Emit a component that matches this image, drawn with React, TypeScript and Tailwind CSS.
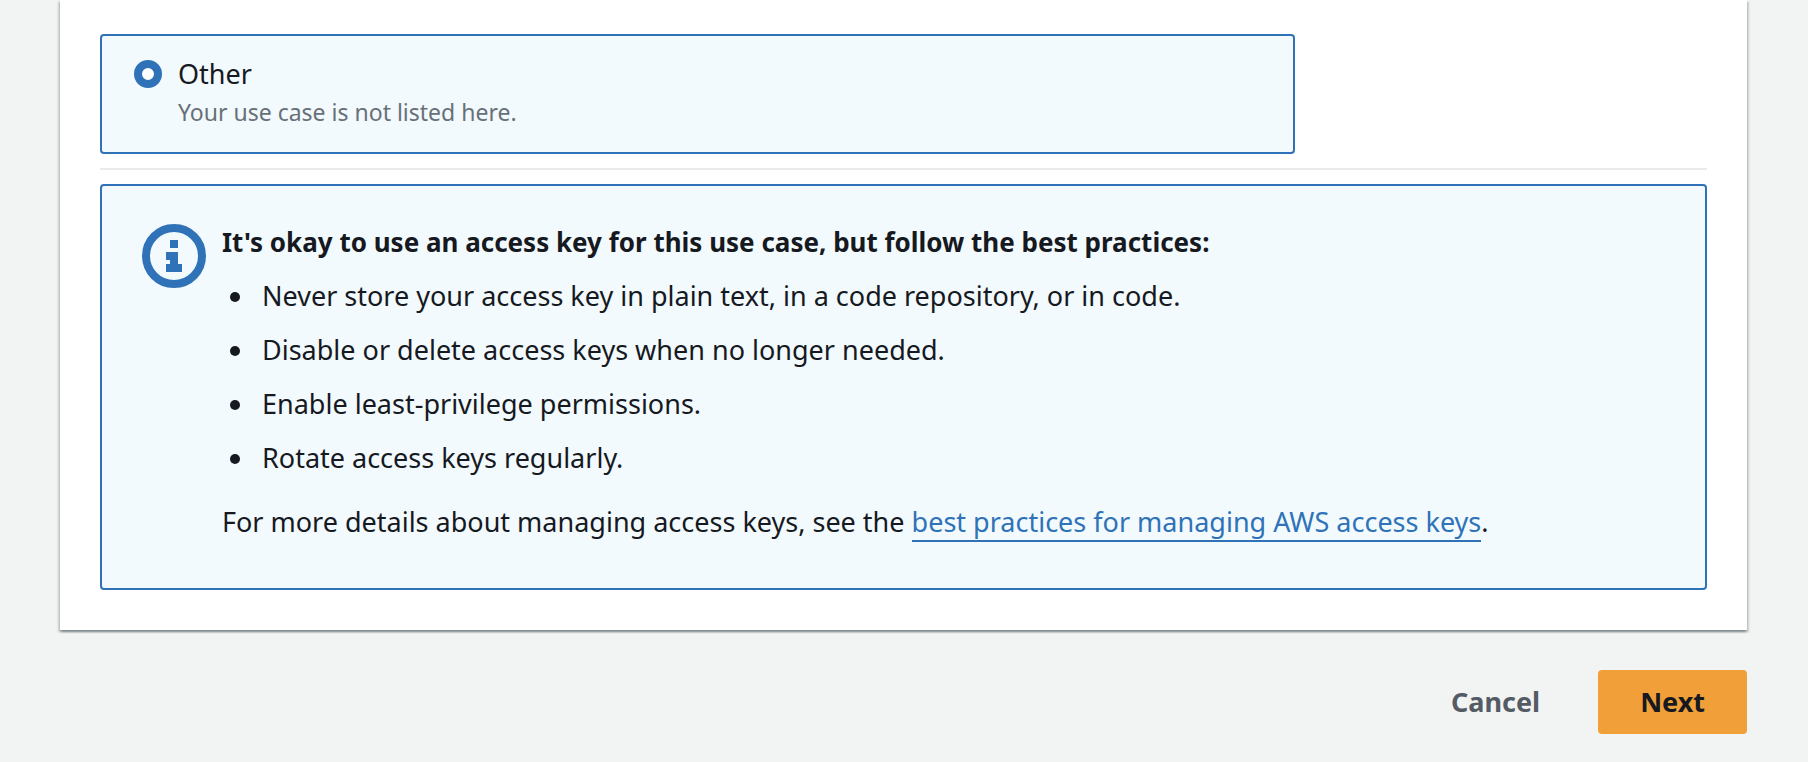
const practices = [
  'Never store your access key in plain text, in a code repository, or in code.',
  'Disable or delete access keys when no longer needed.',
  'Enable least-privilege permissions.',
  'Rotate access keys regularly.',
]

function InfoIcon() {
  return (
    <svg
      viewBox="0 0 16 16"
      className="mt-1 size-16 shrink-0 text-[#2f72b8]"
      fill="currentColor"
      aria-hidden="true"
    >
      <circle
        cx="8"
        cy="8"
        r="7"
        fill="none"
        stroke="currentColor"
        strokeWidth="2"
      />
      <path d="M7 4h2v2H7zM6 7h3v3h1v2H6v-2h1V9H6z" />
    </svg>
  )
}

export default function App() {
  return (
    <div className="min-h-screen bg-[#f2f4f3] pr-[61px] pb-7 pl-[60px] font-['Noto_Sans',sans-serif] text-[27px] leading-[44px] text-[#16191f]">
      <main className="bg-white px-10 pt-[34px] pb-10 shadow-[0_2px_2px_rgba(0,28,36,0.3),2px_2px_2px_rgba(0,28,36,0.15),-2px_2px_2px_rgba(0,28,36,0.15)]">
        {/* Use case */}
        <div className="w-3/4 pr-[10px]">
          <label className="flex gap-4 rounded border-2 border-[#2f72b8] bg-[#f2fafd] px-8 pt-4 pb-6">
            <input
              type="radio"
              name="use-case"
              value="other"
              defaultChecked
              className="mt-2 size-7 shrink-0 appearance-none rounded-full border-8 border-[#2f72b8] bg-white"
            />
            <span className="flex flex-col">
              <span>Other</span>
              <span className="text-[23px] leading-8 text-[#687078]">
                Your use case is not listed here.
              </span>
            </span>
          </label>
        </div>

        <hr className="my-[14px] border-t-2 border-[#eaeaea]" />

        {/* Best practices */}
        <section className="flex gap-4 rounded border-2 border-[#2f72b8] bg-[#f2fafd] px-10 pt-[34px] pb-11">
          <InfoIcon />
          <div className="min-w-0 flex-1">
            <h2 className="mb-[10px] text-[26px] leading-[44px] font-bold">
              It's okay to use an access key for this use case, but follow the
              best practices:
            </h2>
            <ul className="mb-5 space-y-[10px] pl-2">
              {practices.map((practice) => (
                <li
                  key={practice}
                  className="flex gap-[22px] before:mt-[18px] before:size-[10px] before:shrink-0 before:rounded-full before:bg-[#16191f]"
                >
                  {practice}
                </li>
              ))}
            </ul>
            <p>
              For more details about managing access keys, see the{' '}
              <a
                href="#best-practices"
                className="border-b-2 border-[#2f72b8] text-[#2f72b8]"
              >
                best practices for managing AWS access keys
              </a>
              .
            </p>
          </div>
        </section>
      </main>

      {/* Actions */}
      <div className="mt-10 flex justify-end gap-4 font-bold">
        <button type="button" className="h-16 px-[42px] text-[#545b64]">
          Cancel
        </button>
        <button type="button" className="h-16 rounded bg-[#f19f38] px-[42px]">
          Next
        </button>
      </div>
    </div>
  )
}
